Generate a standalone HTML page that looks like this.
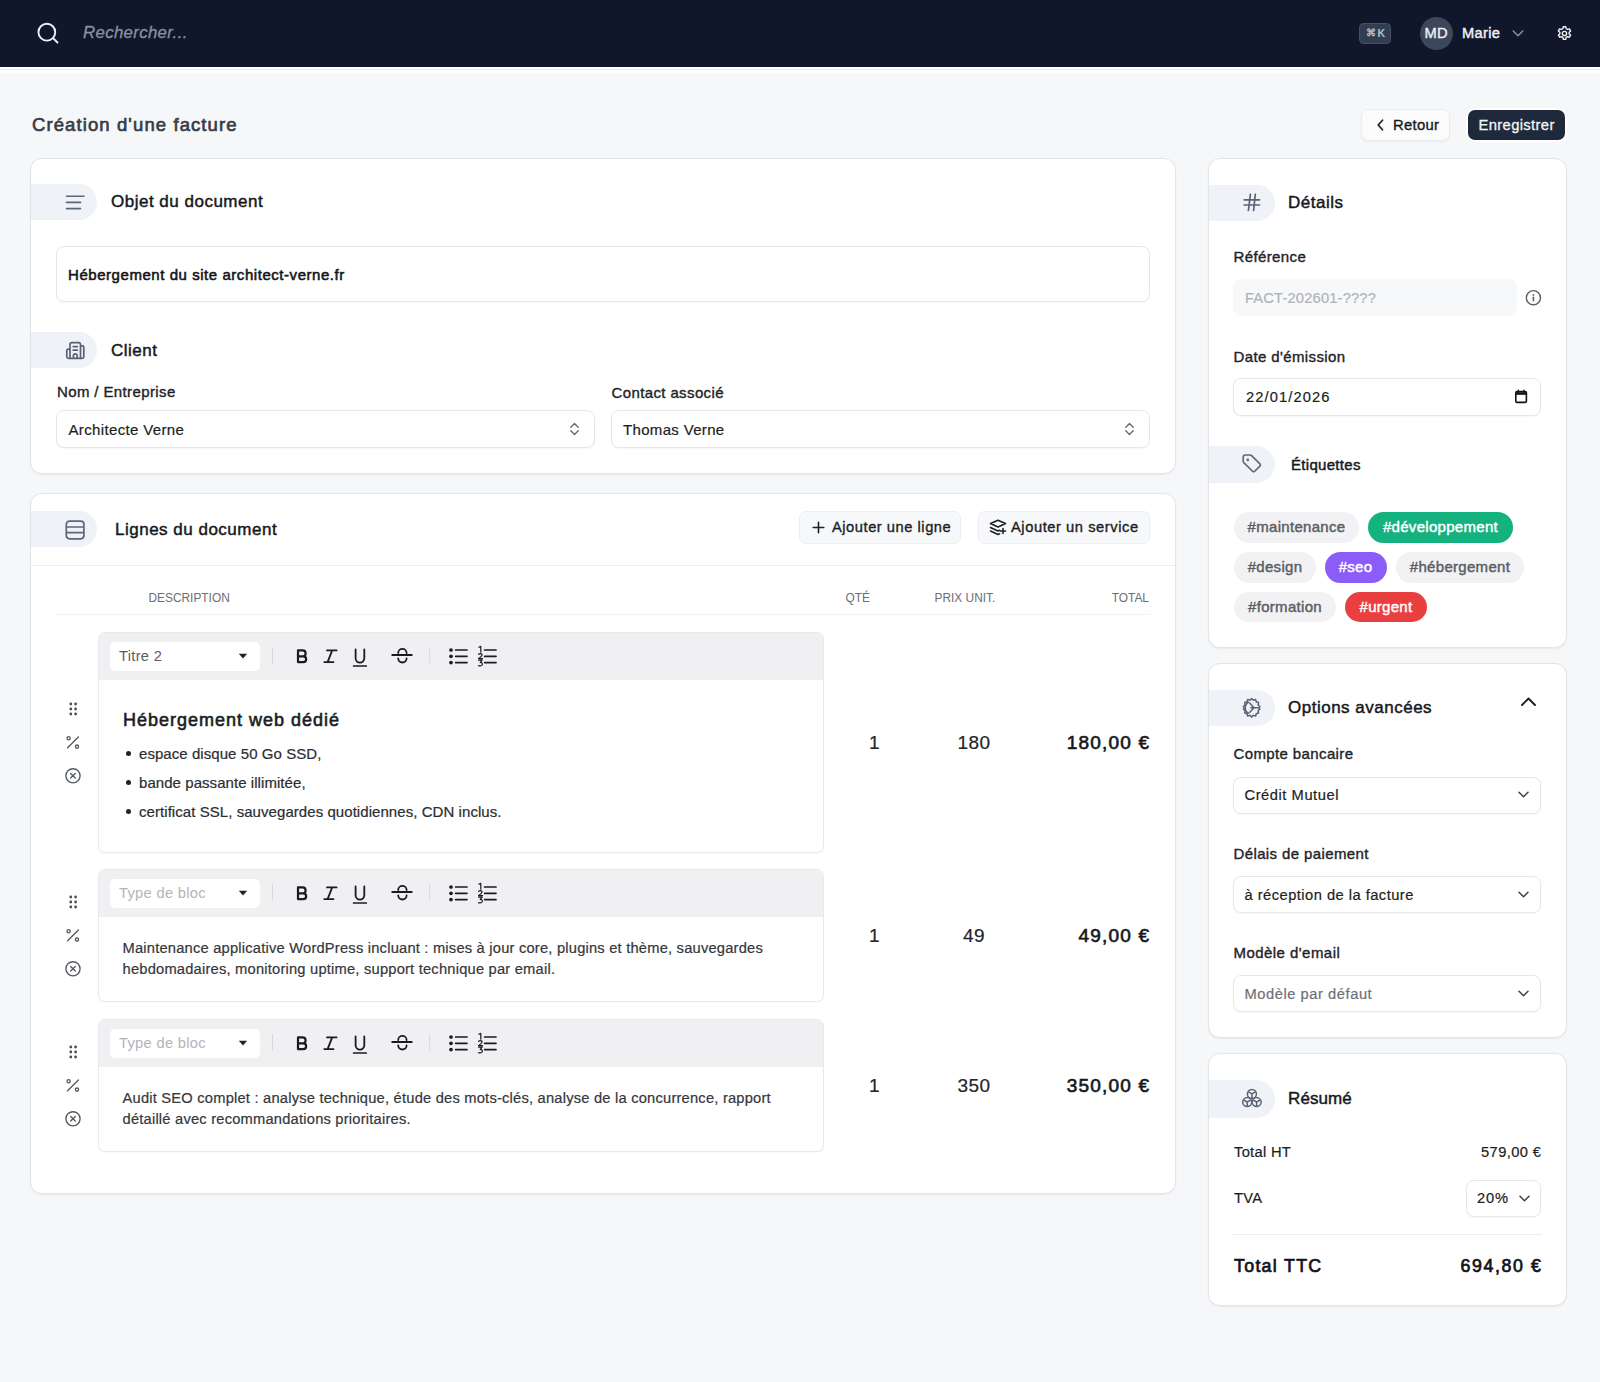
<!DOCTYPE html>
<html lang="fr">
<head>
<meta charset="utf-8">
<title>Création d'une facture</title>
<style>
*{box-sizing:border-box;margin:0;padding:0}
html,body{width:1600px;height:1382px;overflow:hidden}
body{background:#f6f7f9;font-family:"Liberation Sans",sans-serif;color:#111827;position:relative}
.a{position:absolute}
.t{position:absolute;white-space:nowrap;line-height:1}
.r{-webkit-text-stroke:.2px currentColor}
.nav{left:0;top:0;width:1600px;height:66.5px;background:#10172a}
.navline{left:0;top:66.5px;width:1600px;height:5px;background:#fdfefe;border-top:2.5px solid #fdfefe;box-shadow:0 1px 1px rgba(255,255,255,.6)}
.navline2{left:0;top:69px;width:1600px;height:1px;background:#eceeee}
.card{position:absolute;background:#fff;border:1px solid #e2e4e8;border-radius:12px;box-shadow:0 1px 2px rgba(16,24,40,.06)}
.pill{position:absolute;left:-1px;width:66px;height:36px;background:#eff2f6;border-radius:0 20px 20px 0;filter:blur(.6px)}
.box{position:absolute;background:#fff;border:1px solid #e6e7ea;border-radius:8px;box-shadow:0 1px 2px rgba(0,0,0,.04)}
.lbl{font-weight:normal;font-size:15px;color:#1f2328;-webkit-text-stroke:.38px #1f2328;letter-spacing:.38px}
.sec{font-weight:normal;font-size:17px;color:#16181d;-webkit-text-stroke:.45px #16181d;letter-spacing:.5px}
.th{font-size:11.9px;color:#6b6e74;letter-spacing:0}
.blk{position:absolute;background:#fff;border:1px solid #e8e9ec;border-radius:7px;overflow:hidden;box-shadow:0 1px 2px rgba(0,0,0,.03)}
.tb{height:47px;background:#f0f0f2}
.dd{position:absolute;width:150px;height:29.5px;background:#fff;border-radius:5px}
.ddt{font-size:14.7px;letter-spacing:.3px}
.bul{font-size:15px;color:#2b2d31;letter-spacing:.06px;-webkit-text-stroke:.2px #2b2d31}
.par{font-size:14.7px;color:#35373b;letter-spacing:.21px;-webkit-text-stroke:.2px #35373b}
.num{font-size:19px;color:#23252a;letter-spacing:.5px;-webkit-text-stroke:.2px #23252a}
.nc{left:924px;width:100px;text-align:center}
.numb{font-size:19px;color:#16181c;-webkit-text-stroke:.65px #16181c;letter-spacing:1.2px;margin-right:-1.2px}
.dot{position:absolute;width:5px;height:5px;border-radius:50%;background:#222}
.tools,.side{position:absolute}
.tag{position:absolute;height:30.5px;border-radius:16px;font-size:15px;line-height:30.5px;text-align:center;white-space:nowrap;-webkit-text-stroke:.45px currentColor;letter-spacing:.3px}
.tag.g{background:#f2f2f4;color:#5b5e65}
.sel{font-size:14.7px;color:#1c1e22;letter-spacing:.3px;-webkit-text-stroke:.2px currentColor}
svg{position:absolute;overflow:visible}
</style>
</head>
<body>
<!-- NAV -->
<div class="a nav"></div>
<div class="a navline"></div>
<div class="a navline2"></div>
<svg style="left:37px;top:22px" width="22" height="22" viewBox="0 0 22 22"><circle cx="9.85" cy="10.2" r="8.4" fill="none" stroke="#eef0f8" stroke-width="1.9"/><path d="M16.3 16.3 L20.5 20.5" stroke="#eef0f8" stroke-width="1.9" stroke-linecap="round"/></svg>
<div class="t" style="left:83px;top:25px;font-size:16.8px;font-style:italic;color:#8a91a1;-webkit-text-stroke:.3px #8a91a1;letter-spacing:.35px">Rechercher...</div>
<div class="a" style="left:1359px;top:23px;width:32px;height:20.5px;background:#333d51;border:1px solid #465066;border-radius:4.5px"></div>
<div class="t" style="left:1365.5px;top:28.2px;font-size:9.5px;font-weight:bold;color:#b4bdd0">⌘</div>
<div class="t" style="left:1377.6px;top:28.4px;font-size:10.6px;font-weight:bold;color:#b4bdd0">K</div>
<div class="a" style="left:1420px;top:16.5px;width:33px;height:33px;background:#3d475a;border-radius:50%"></div>
<div class="t" style="left:1424.5px;top:26px;font-size:14.7px;color:#eef0f4;-webkit-text-stroke:.4px #eef0f4;letter-spacing:.3px">MD</div>
<div class="t" style="left:1462px;top:26px;font-size:14.7px;color:#eef0f4;-webkit-text-stroke:.45px #eef0f4;letter-spacing:.3px">Marie</div>
<svg style="left:1512px;top:30px" width="12" height="7" viewBox="0 0 12 7"><path d="M1.2 1 L6 5.8 L10.8 1" fill="none" stroke="#8d94a3" stroke-width="1.4" stroke-linecap="round" stroke-linejoin="round"/></svg>
<svg style="left:1556px;top:24.5px" width="17" height="17" viewBox="0 0 24 24"><path d="M10.3 2.4h3.4l.6 2.7a7.6 7.6 0 0 1 2 1.15l2.6-.85 1.7 2.95-2.05 1.85a7.6 7.6 0 0 1 0 2.3l2.05 1.85-1.7 2.95-2.6-.85a7.6 7.6 0 0 1-2 1.15l-.6 2.7h-3.4l-.6-2.7a7.6 7.6 0 0 1-2-1.15l-2.6.85-1.7-2.95 2.05-1.85a7.6 7.6 0 0 1 0-2.3L3.4 8.35l1.7-2.95 2.6.85a7.6 7.6 0 0 1 2-1.15z" fill="none" stroke="#f1f2f5" stroke-width="2" stroke-linejoin="round"/><circle cx="12" cy="12" r="3" fill="none" stroke="#f1f2f5" stroke-width="2"/></svg>

<!-- page header -->
<div class="t" style="left:32px;top:115.6px;font-size:18.5px;color:#363b44;-webkit-text-stroke:.65px #363b44;letter-spacing:1.1px">Création d'une facture</div>
<div class="a" style="left:1361px;top:109px;width:89px;height:32px;background:#fbfbfc;border:1px solid #ebecef;border-radius:7px;box-shadow:0 1px 2px rgba(0,0,0,.05)"></div>
<svg style="left:1376px;top:119px" width="9" height="12" viewBox="0 0 9 12"><path d="M6.5 1.2 L2.2 6 L6.5 10.8" fill="none" stroke="#1b1d22" stroke-width="1.7" stroke-linecap="round" stroke-linejoin="round"/></svg>
<div class="t" style="left:1393px;top:118px;font-size:14.8px;color:#15171b;-webkit-text-stroke:.35px #15171b;letter-spacing:.3px">Retour</div>
<div class="a" style="left:1466px;top:108px;width:101px;height:34px;background:#fff;border-radius:9px"></div>
<div class="a" style="left:1468px;top:110px;width:97px;height:30px;background:#1e293b;border-radius:7px"></div>
<div class="t" style="left:1478.5px;top:118px;font-size:14.8px;color:#f3f4f6;-webkit-text-stroke:.3px #f3f4f6;letter-spacing:.35px">Enregistrer</div>

<!-- LEFT CARD 1 -->
<div class="card" style="left:30px;top:158px;width:1146px;height:316px"></div>
<div class="pill" style="left:31px;top:184px"></div>
<svg style="left:65px;top:195px" width="20" height="15" viewBox="0 0 20 15"><path d="M1.5 1.2H19M1.5 7.4H15.5M1.5 13.6H15.5" fill="none" stroke="#5d6678" stroke-width="1.6" stroke-linecap="round"/></svg>
<div class="t sec" style="left:111px;top:193px">Objet du document</div>
<div class="box" style="left:56px;top:246px;width:1094px;height:56px"></div>
<div class="t" style="left:68px;top:267px;font-size:15px;color:#131519;-webkit-text-stroke:.55px #131519;letter-spacing:.55px">Hébergement du site architect-verne.fr</div>
<div class="pill" style="left:31px;top:332px"></div>
<svg style="left:64px;top:341px" width="22" height="19" viewBox="0 0 22 19"><path d="M6 17.4V3.6Q6 1.6 8 1.6H14.5Q16.5 1.6 16.5 3.6V17.4M6 8.2H4.2Q2.8 8.2 2.8 9.6V15.8Q2.8 17.4 4.4 17.4H18.2Q19.8 17.4 19.8 15.8V6.4Q19.8 4.9 18.3 4.9H16.5M9.2 5.6H13.4M9.2 9.2H13.4M9.4 17.4V14.8A1.85 1.85 0 0 1 13.1 14.8V17.4" fill="none" stroke="#5a6273" stroke-width="1.7" stroke-linecap="round" stroke-linejoin="round"/></svg>
<div class="t sec" style="left:111px;top:342px">Client</div>
<div class="t lbl" style="left:57px;top:384.2px">Nom / Entreprise</div>
<div class="box" style="left:56px;top:410px;width:539px;height:38px"></div>
<div class="t r" style="left:68.5px;top:422px;font-size:15px;color:#1c1e22;letter-spacing:.35px">Architecte Verne</div>
<svg style="left:569px;top:422px" width="11" height="14" viewBox="0 0 11 14"><path d="M1.8 5.2L5.5 1.5L9.2 5.2M1.8 8.8L5.5 12.5L9.2 8.8" fill="none" stroke="#666a70" stroke-width="1.4" stroke-linecap="round" stroke-linejoin="round"/></svg>
<div class="t lbl" style="left:611.5px;top:385.2px">Contact associé</div>
<div class="box" style="left:611px;top:410px;width:539px;height:38px"></div>
<div class="t r" style="left:623px;top:422px;font-size:15px;color:#1c1e22;letter-spacing:.33px">Thomas Verne</div>
<svg style="left:1124px;top:422px" width="11" height="14" viewBox="0 0 11 14"><path d="M1.8 5.2L5.5 1.5L9.2 5.2M1.8 8.8L5.5 12.5L9.2 8.8" fill="none" stroke="#666a70" stroke-width="1.4" stroke-linecap="round" stroke-linejoin="round"/></svg>

<!-- LEFT CARD 2 -->
<div class="card" style="left:30px;top:493px;width:1146px;height:701px"></div>
<div class="pill" style="left:31px;top:511px"></div>
<svg style="left:65px;top:520px" width="20" height="20" viewBox="0 0 20 20"><rect x="1.3" y="1.2" width="17.6" height="17.6" rx="3.2" fill="none" stroke="#5d6678" stroke-width="1.7"/><path d="M1.5 7H18.7M1.5 12.6H18.7" stroke="#5d6678" stroke-width="1.7"/></svg>
<div class="t sec" style="left:115px;top:520.7px">Lignes du document</div>
<div class="a" style="left:799px;top:511px;width:162px;height:33px;background:#f7f8fa;border:1px solid #eceef1;border-radius:7px"></div>
<svg style="left:812px;top:521px" width="13" height="13" viewBox="0 0 13 13"><path d="M6.5 1.2V11.8M1.2 6.5H11.8" stroke="#1d2025" stroke-width="1.6" stroke-linecap="round"/></svg>
<div class="t" style="left:832px;top:520px;font-size:14.7px;color:#1b1e23;-webkit-text-stroke:.35px #1b1e23;letter-spacing:.53px">Ajouter une ligne</div>
<div class="a" style="left:978px;top:511px;width:172px;height:33px;background:#f7f8fa;border:1px solid #eceef1;border-radius:7px"></div>
<svg style="left:989px;top:519px" width="18" height="16" viewBox="0 0 18 16"><path d="M1.5 4.6L9 1.2L16.5 4.6L9 8Z M1.5 8.5L9 12L10.6 11.3 M1.5 12L9 15.5L10.6 14.8 M14 9.5V14.5M11.5 12H16.5" fill="none" stroke="#1d2025" stroke-width="1.6" stroke-linecap="round" stroke-linejoin="round"/></svg>
<div class="t" style="left:1011px;top:520px;font-size:14.7px;color:#1b1e23;-webkit-text-stroke:.35px #1b1e23;letter-spacing:.56px">Ajouter un service</div>
<div class="a" style="left:31px;top:565px;width:1144px;height:1px;background:#ebecef"></div>
<div class="t th" style="left:148.5px;top:592.5px">DESCRIPTION</div>
<div class="t th" style="left:845.5px;top:592.5px">QTÉ</div>
<div class="t th" style="left:934.5px;top:592.5px">PRIX UNIT.</div>
<div class="t th" style="right:451px;top:592.5px">TOTAL</div>
<div class="a" style="left:56px;top:614px;width:1094px;height:1px;background:#f1f2f4"></div>

<!-- block 1 -->
<div class="blk" style="left:98px;top:632px;width:726px;height:221px"><div class="tb"></div></div>
<div class="dd" style="left:110px;top:641.5px"></div>
<div class="t ddt" style="left:119px;top:649px;color:#5a5d63">Titre 2</div>
<svg style="left:238px;top:653px" width="10" height="7" viewBox="0 0 10 7"><path d="M0.8 0.8H9.2L5 5.6Z" fill="#222"/></svg>
<div class="tools" style="left:270px;top:646px"><svg style="left:0;top:0" width="230" height="22" viewBox="0 0 230 22"><g fill="none" stroke="#1a1b1e" stroke-linecap="round" stroke-linejoin="round"><path d="M2.5 1.7V17.5M159.7 1.7V17.5" stroke="#d7d8db" stroke-width="1"/><path d="M28 4.4H32.6A3 3 0 0 1 32.6 10.4H28ZM28 10.4H33.3A2.85 2.85 0 0 1 33.3 16.1H28Z" stroke-width="2.2"/><path d="M57 4.4H66.6M54.3 16.1H63.5M62.2 4.4L57.6 16.1" stroke-width="1.8"/><path d="M85.6 3.5V12.3A4.35 4.35 0 0 0 94.3 12.3V3.5" stroke-width="1.8"/><path d="M83.6 20H96.3" stroke-width="1.7"/><path d="M122.2 9H141.8" stroke-width="1.8"/><path d="M128.2 7A4.2 4.2 0 0 1 136.6 7M128.2 12.3A4.2 4.2 0 0 0 136.6 12.3" stroke-width="1.8"/><path d="M185.6 4H197M185.6 10.3H197M185.6 16.6H197M214.6 4H226M214.6 10.3H226M214.6 16.6H226" stroke-width="1.7"/><path d="M208.8 1.2L210.8 0.4V6.2M208.6 8.3Q210.4 7 212 8.3Q212.6 9.8 208.6 12.6H212.6M208.6 14.2H212.2L210.2 16.4Q212.8 16.6 212.3 18.8Q211.2 20.6 208.6 19.6" stroke-width="1.2"/></g><g fill="#1a1b1e"><circle cx="181" cy="4" r="1.85"/><circle cx="181" cy="10.3" r="1.85"/><circle cx="181" cy="16.6" r="1.85"/></g></svg></div>
<div class="side" style="left:64px;top:700px"><svg style="left:0;top:0" width="20" height="90" viewBox="0 0 20 90"><g fill="#4a4e54"><circle cx="6.8" cy="4" r="1.4"/><circle cx="11.6" cy="4" r="1.4"/><circle cx="6.8" cy="9" r="1.4"/><circle cx="11.6" cy="9" r="1.4"/><circle cx="6.8" cy="14" r="1.4"/><circle cx="11.6" cy="14" r="1.4"/></g><g fill="none" stroke="#555a60" stroke-width="1.35" stroke-linecap="round"><circle cx="4.6" cy="38.2" r="1.6"/><circle cx="13" cy="46.6" r="1.6"/><path d="M14.4 37L3.6 47.8"/><circle cx="9" cy="75.8" r="7.1"/><path d="M6.7 73.5L11.3 78.1M11.3 73.5L6.7 78.1"/></g></svg></div>
<div class="t" style="left:123px;top:711px;font-size:18px;color:#1b1d21;-webkit-text-stroke:.6px #1b1d21;letter-spacing:1px">Hébergement web dédié</div>
<div class="t bul" style="left:139px;top:746px">espace disque 50 Go SSD,</div>
<div class="t bul" style="left:139px;top:775px">bande passante illimitée,</div>
<div class="t bul" style="left:139px;top:804px">certificat SSL, sauvegardes quotidiennes, CDN inclus.</div>
<div class="dot" style="left:126px;top:751px"></div>
<div class="dot" style="left:126px;top:780px"></div>
<div class="dot" style="left:126px;top:809px"></div>
<div class="t num" style="left:869px;top:733px">1</div>
<div class="t num nc" style="top:733px">180</div>
<div class="t numb" style="right:451px;top:733px">180,00 €</div>

<!-- block 2 -->
<div class="blk" style="left:98px;top:869px;width:726px;height:133px"><div class="tb"></div></div>
<div class="dd" style="left:110px;top:878.5px"></div>
<div class="t ddt" style="left:119px;top:886.2px;color:#b3b5b9">Type de bloc</div>
<svg style="left:238px;top:890px" width="10" height="7" viewBox="0 0 10 7"><path d="M0.8 0.8H9.2L5 5.6Z" fill="#222"/></svg>
<div class="tools" style="left:270px;top:883px"><svg style="left:0;top:0" width="230" height="22" viewBox="0 0 230 22"><g fill="none" stroke="#1a1b1e" stroke-linecap="round" stroke-linejoin="round"><path d="M2.5 1.7V17.5M159.7 1.7V17.5" stroke="#d7d8db" stroke-width="1"/><path d="M28 4.4H32.6A3 3 0 0 1 32.6 10.4H28ZM28 10.4H33.3A2.85 2.85 0 0 1 33.3 16.1H28Z" stroke-width="2.2"/><path d="M57 4.4H66.6M54.3 16.1H63.5M62.2 4.4L57.6 16.1" stroke-width="1.8"/><path d="M85.6 3.5V12.3A4.35 4.35 0 0 0 94.3 12.3V3.5" stroke-width="1.8"/><path d="M83.6 20H96.3" stroke-width="1.7"/><path d="M122.2 9H141.8" stroke-width="1.8"/><path d="M128.2 7A4.2 4.2 0 0 1 136.6 7M128.2 12.3A4.2 4.2 0 0 0 136.6 12.3" stroke-width="1.8"/><path d="M185.6 4H197M185.6 10.3H197M185.6 16.6H197M214.6 4H226M214.6 10.3H226M214.6 16.6H226" stroke-width="1.7"/><path d="M208.8 1.2L210.8 0.4V6.2M208.6 8.3Q210.4 7 212 8.3Q212.6 9.8 208.6 12.6H212.6M208.6 14.2H212.2L210.2 16.4Q212.8 16.6 212.3 18.8Q211.2 20.6 208.6 19.6" stroke-width="1.2"/></g><g fill="#1a1b1e"><circle cx="181" cy="4" r="1.85"/><circle cx="181" cy="10.3" r="1.85"/><circle cx="181" cy="16.6" r="1.85"/></g></svg></div>
<div class="side" style="left:64px;top:893px"><svg style="left:0;top:0" width="20" height="90" viewBox="0 0 20 90"><g fill="#4a4e54"><circle cx="6.8" cy="4" r="1.4"/><circle cx="11.6" cy="4" r="1.4"/><circle cx="6.8" cy="9" r="1.4"/><circle cx="11.6" cy="9" r="1.4"/><circle cx="6.8" cy="14" r="1.4"/><circle cx="11.6" cy="14" r="1.4"/></g><g fill="none" stroke="#555a60" stroke-width="1.35" stroke-linecap="round"><circle cx="4.6" cy="38.2" r="1.6"/><circle cx="13" cy="46.6" r="1.6"/><path d="M14.4 37L3.6 47.8"/><circle cx="9" cy="75.8" r="7.1"/><path d="M6.7 73.5L11.3 78.1M11.3 73.5L6.7 78.1"/></g></svg></div>
<div class="t par" style="left:122.5px;top:941px">Maintenance applicative WordPress incluant : mises à jour core, plugins et thème, sauvegardes</div>
<div class="t par" style="left:122.5px;top:962px">hebdomadaires, monitoring uptime, support technique par email.</div>
<div class="t num" style="left:869px;top:926px">1</div>
<div class="t num nc" style="top:926px">49</div>
<div class="t numb" style="right:451px;top:926px">49,00 €</div>

<!-- block 3 -->
<div class="blk" style="left:98px;top:1019px;width:726px;height:133px"><div class="tb"></div></div>
<div class="dd" style="left:110px;top:1028.5px"></div>
<div class="t ddt" style="left:119px;top:1036.2px;color:#b3b5b9">Type de bloc</div>
<svg style="left:238px;top:1040px" width="10" height="7" viewBox="0 0 10 7"><path d="M0.8 0.8H9.2L5 5.6Z" fill="#222"/></svg>
<div class="tools" style="left:270px;top:1033px"><svg style="left:0;top:0" width="230" height="22" viewBox="0 0 230 22"><g fill="none" stroke="#1a1b1e" stroke-linecap="round" stroke-linejoin="round"><path d="M2.5 1.7V17.5M159.7 1.7V17.5" stroke="#d7d8db" stroke-width="1"/><path d="M28 4.4H32.6A3 3 0 0 1 32.6 10.4H28ZM28 10.4H33.3A2.85 2.85 0 0 1 33.3 16.1H28Z" stroke-width="2.2"/><path d="M57 4.4H66.6M54.3 16.1H63.5M62.2 4.4L57.6 16.1" stroke-width="1.8"/><path d="M85.6 3.5V12.3A4.35 4.35 0 0 0 94.3 12.3V3.5" stroke-width="1.8"/><path d="M83.6 20H96.3" stroke-width="1.7"/><path d="M122.2 9H141.8" stroke-width="1.8"/><path d="M128.2 7A4.2 4.2 0 0 1 136.6 7M128.2 12.3A4.2 4.2 0 0 0 136.6 12.3" stroke-width="1.8"/><path d="M185.6 4H197M185.6 10.3H197M185.6 16.6H197M214.6 4H226M214.6 10.3H226M214.6 16.6H226" stroke-width="1.7"/><path d="M208.8 1.2L210.8 0.4V6.2M208.6 8.3Q210.4 7 212 8.3Q212.6 9.8 208.6 12.6H212.6M208.6 14.2H212.2L210.2 16.4Q212.8 16.6 212.3 18.8Q211.2 20.6 208.6 19.6" stroke-width="1.2"/></g><g fill="#1a1b1e"><circle cx="181" cy="4" r="1.85"/><circle cx="181" cy="10.3" r="1.85"/><circle cx="181" cy="16.6" r="1.85"/></g></svg></div>
<div class="side" style="left:64px;top:1043px"><svg style="left:0;top:0" width="20" height="90" viewBox="0 0 20 90"><g fill="#4a4e54"><circle cx="6.8" cy="4" r="1.4"/><circle cx="11.6" cy="4" r="1.4"/><circle cx="6.8" cy="9" r="1.4"/><circle cx="11.6" cy="9" r="1.4"/><circle cx="6.8" cy="14" r="1.4"/><circle cx="11.6" cy="14" r="1.4"/></g><g fill="none" stroke="#555a60" stroke-width="1.35" stroke-linecap="round"><circle cx="4.6" cy="38.2" r="1.6"/><circle cx="13" cy="46.6" r="1.6"/><path d="M14.4 37L3.6 47.8"/><circle cx="9" cy="75.8" r="7.1"/><path d="M6.7 73.5L11.3 78.1M11.3 73.5L6.7 78.1"/></g></svg></div>
<div class="t par" style="left:122.5px;top:1091px">Audit SEO complet : analyse technique, étude des mots-clés, analyse de la concurrence, rapport</div>
<div class="t par" style="left:122.5px;top:1112px">détaillé avec recommandations prioritaires.</div>
<div class="t num" style="left:869px;top:1076px">1</div>
<div class="t num nc" style="top:1076px">350</div>
<div class="t numb" style="right:451px;top:1076px">350,00 €</div>

<!-- RIGHT CARD 1 -->
<div class="card" style="left:1208px;top:158px;width:359px;height:490px"></div>
<div class="pill" style="left:1209px;top:185px"></div>
<svg style="left:1243px;top:193px" width="18" height="19" viewBox="0 0 18 19"><path d="M7.4 1.3L5.4 17.5M12.3 1.3L10.6 17.5M1.2 6.8H16.5M1.2 12H16.5" fill="none" stroke="#5a6376" stroke-width="1.7" stroke-linecap="round"/></svg>
<div class="t sec" style="left:1288px;top:193.5px">Détails</div>
<div class="t lbl" style="left:1233.5px;top:248.8px">Référence</div>
<div class="a" style="left:1233px;top:279px;width:284px;height:37px;background:#f7f8fa;border-radius:8px"></div>
<div class="t r" style="left:1245px;top:290.6px;font-size:14.7px;color:#b0b3b9;letter-spacing:.18px">FACT-202601-????</div>
<svg style="left:1524px;top:289px" width="18" height="18" viewBox="0 0 18 18"><circle cx="9.4" cy="8.7" r="7.1" fill="none" stroke="#5b5e63" stroke-width="1.4"/><path d="M9.4 8.2V11.8" stroke="#5b5e63" stroke-width="1.6" stroke-linecap="round"/><circle cx="9.4" cy="5.9" r=".95" fill="#5b5e63"/></svg>
<div class="t lbl" style="left:1233.5px;top:348.5px">Date d'émission</div>
<div class="box" style="left:1233px;top:378px;width:308px;height:38px"></div>
<div class="t r" style="left:1246px;top:390.1px;font-size:14.7px;color:#1c1e22;letter-spacing:1.1px">22/01/2026</div>
<svg style="left:1514px;top:389px" width="14" height="15" viewBox="0 0 14 15"><rect x="1.8" y="2.6" width="10.6" height="10.8" rx="1.2" fill="none" stroke="#111" stroke-width="1.6"/><path d="M1.8 3.3H12.4V5.8H1.8Z" fill="#111"/><path d="M4.3 1.3V3M9.9 1.3V3" stroke="#111" stroke-width="1.4" stroke-linecap="round"/></svg>
<div class="pill" style="left:1209px;top:445.5px;height:37px"></div>
<svg style="left:1240px;top:453px" width="22" height="21" viewBox="0 0 22 21"><path d="M3.2 4.2Q3.2 2 5.4 2H10.2Q11 2 11.6 2.6L19.9 10.9Q21 12 19.9 13.1L14.7 18.3Q13.6 19.4 12.5 18.3L3.8 9.6Q3.2 9 3.2 8.2Z" fill="none" stroke="#5f6776" stroke-width="1.6" stroke-linejoin="round"/><circle cx="7.8" cy="6.9" r="1.3" fill="#5f6776"/></svg>
<div class="t" style="left:1291px;top:456.8px;font-size:15px;color:#16181d;-webkit-text-stroke:.45px #16181d;letter-spacing:.3px">Étiquettes</div>
<div class="tag g" style="left:1234px;top:512px;width:125px">#maintenance</div>
<div class="tag" style="left:1368px;top:512px;width:145px;background:#14b27e;color:#fff">#développement</div>
<div class="tag g" style="left:1234px;top:552px;width:82px">#design</div>
<div class="tag" style="left:1324.5px;top:552px;width:62px;background:#8b5cf6;color:#fff">#seo</div>
<div class="tag g" style="left:1396px;top:552px;width:128px">#hébergement</div>
<div class="tag g" style="left:1234px;top:591.5px;width:102px">#formation</div>
<div class="tag" style="left:1345px;top:591.5px;width:82px;background:#ea3f3f;color:#fff">#urgent</div>
<!-- RIGHT CARD 2 -->
<div class="card" style="left:1208px;top:663px;width:359px;height:375px"></div>
<div class="pill" style="left:1209px;top:690px"></div>
<svg style="left:1241px;top:697px" width="22" height="22" viewBox="0 0 22 22"><g transform="translate(10.65 10.75)" fill="none" stroke="#5a6376" stroke-width="1.5" stroke-linejoin="round"><path d="M0-9.3L1.7-7.6L4-8.3L4.6-6L6.9-5.2L6.5-2.9L8.3-1.3L7-.0L8.3 1.3L6.5 2.9L6.9 5.2L4.6 6L4 8.3L1.7 7.6L0 9.3L-1.7 7.6L-4 8.3L-4.6 6L-6.9 5.2L-6.5 2.9L-8.3 1.3L-7 0L-8.3-1.3L-6.5-2.9L-6.9-5.2L-4.6-6L-4-8.3L-1.7-7.6Z"/><path d="M-2.6-5.8A6.3 6.3 0 0 0-2.6 5.8M-2.2-5L2.3 0L-2.2 5M-1.3 0H7"/></g></svg>
<div class="t sec" style="left:1288px;top:699.2px">Options avancées</div>
<svg style="left:1520px;top:696px" width="17" height="11" viewBox="0 0 17 11"><path d="M2 9L8.5 2.5L15 9" fill="none" stroke="#1b1d21" stroke-width="1.9" stroke-linecap="round" stroke-linejoin="round"/></svg>
<div class="t lbl" style="left:1233.5px;top:746.3px">Compte bancaire</div>
<div class="box" style="left:1233px;top:776.5px;width:308px;height:37.5px"></div>
<div class="t sel" style="left:1244.5px;top:788.3px;letter-spacing:.55px">Crédit Mutuel</div>
<svg class="chev" style="left:1517px;top:790px" width="13" height="9" viewBox="0 0 13 9"><path d="M2 2.2L6.5 6.7L11 2.2" fill="none" stroke="#3e4147" stroke-width="1.5" stroke-linecap="round" stroke-linejoin="round"/></svg>
<div class="t lbl" style="left:1233.5px;top:845.7px">Délais de paiement</div>
<div class="box" style="left:1233px;top:876px;width:308px;height:37px"></div>
<div class="t sel" style="left:1244.5px;top:887.6px;letter-spacing:.47px">à réception de la facture</div>
<svg class="chev" style="left:1517px;top:889.5px" width="13" height="9" viewBox="0 0 13 9"><path d="M2 2.2L6.5 6.7L11 2.2" fill="none" stroke="#3e4147" stroke-width="1.5" stroke-linecap="round" stroke-linejoin="round"/></svg>
<div class="t lbl" style="left:1233.5px;top:944.6px;letter-spacing:.45px">Modèle d'email</div>
<div class="box" style="left:1233px;top:975px;width:308px;height:37px"></div>
<div class="t sel" style="left:1244.5px;top:987.1px;color:#6d7077;letter-spacing:.55px">Modèle par défaut</div>
<svg class="chev" style="left:1517px;top:989px" width="13" height="9" viewBox="0 0 13 9"><path d="M2 2.2L6.5 6.7L11 2.2" fill="none" stroke="#3e4147" stroke-width="1.5" stroke-linecap="round" stroke-linejoin="round"/></svg>
<!-- RIGHT CARD 3 -->
<div class="card" style="left:1208px;top:1053px;width:359px;height:253px"></div>
<div class="pill" style="left:1209px;top:1080px;height:37.5px"></div>
<svg style="left:1241px;top:1088px" width="22" height="21" viewBox="0 0 22 21"><g fill="none" stroke="#5a6376" stroke-width="1.5" stroke-linejoin="round"><circle cx="10.9" cy="5.9" r="4.5"/><circle cx="6.2" cy="14.1" r="4.5"/><circle cx="15.6" cy="14.1" r="4.5"/><path d="M10.9 5.9V10.2M10.9 5.9L7.5 3.8M10.9 5.9L14.3 3.8M6.2 14.1V18.4M6.2 14.1L2.8 12M6.2 14.1L9.6 12M15.6 14.1V18.4M15.6 14.1L12.2 12M15.6 14.1L19 12"/></g></svg>
<div class="t sec" style="left:1288px;top:1090px;letter-spacing:.1px">Résumé</div>
<div class="t sel" style="left:1234px;top:1145.1px">Total HT</div>
<div class="t sel" style="right:59px;top:1145.1px;letter-spacing:.4px;margin-right:-.4px">579,00 €</div>
<div class="t sel" style="left:1234px;top:1191.3px">TVA</div>
<div class="box" style="left:1466px;top:1180px;width:75px;height:36.5px"></div>
<div class="t sel" style="left:1477px;top:1191.2px;letter-spacing:.8px">20%</div>
<svg class="chev" style="left:1517.5px;top:1194px" width="13" height="9" viewBox="0 0 13 9"><path d="M2 2.2L6.5 6.7L11 2.2" fill="none" stroke="#3e4147" stroke-width="1.5" stroke-linecap="round" stroke-linejoin="round"/></svg>
<div class="a" style="left:1233px;top:1234px;width:309px;height:1px;background:#ececef"></div>
<div class="t" style="left:1234px;top:1257.5px;font-size:17.8px;color:#111317;-webkit-text-stroke:.7px #111317;letter-spacing:1.3px">Total TTC</div>
<div class="t" style="right:59px;top:1257.5px;font-size:17.8px;color:#111317;-webkit-text-stroke:.7px #111317;letter-spacing:1.6px;margin-right:-1.6px">694,80 €</div>

</body>
</html>
